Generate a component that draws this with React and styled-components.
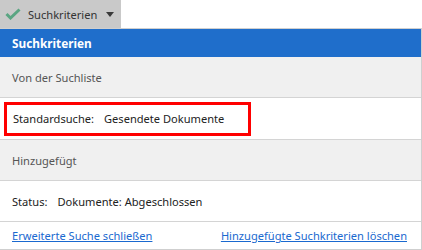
import React from "react";
import styled, { createGlobalStyle } from "styled-components";

const Global = createGlobalStyle`
  html, body {
    margin: 0;
    padding: 0;
    background: #ffffff;
    font-family: "Noto Sans", "Open Sans", sans-serif;
    font-size: 11.1px;
  }
`;

const Page = styled.div`
  width: 422px;
  height: 250px;
  overflow: hidden;
`;

const Toolbar = styled.div`
  display: flex;
  height: 28px;
`;

const MenuButton = styled.div`
  display: flex;
  align-items: center;
  width: 121px;
  height: 28px;
  padding-left: 5px;
  box-sizing: border-box;
  background: #c9c9c9;
  color: #333333;
  gap: 7px;
`;

const Caret = styled.span`
  width: 0;
  height: 0;
  margin-left: 2px;
  border-left: 4px solid transparent;
  border-right: 4px solid transparent;
  border-top: 5px solid #3a3a3a;
`;

const Panel = styled.div`
  width: 422px;
  height: 222px;
  box-sizing: border-box;
  border-top: 1px solid #cfcfcf;
  border-right: 1px solid #cfcfcf;
  border-bottom: 1px solid #cfcfcf;
  display: flex;
  flex-direction: column;
`;

const Header = styled.div`
  height: 28px;
  flex: none;
  background: #1f6ecb;
  color: #ffffff;
  font-size: 11.8px;
  font-weight: bold;
  display: flex;
  align-items: center;
  padding-left: 12px;
`;

const Row = styled.div`
  height: ${(p) => p.$h || 41}px;
  flex: none;
  box-sizing: border-box;
  display: flex;
  align-items: center;
  padding-left: ${(p) => (p.$boxed ? 4 : 12)}px;
  background: ${(p) => (p.$section ? "#f0f0f0" : "#ffffff")};
  color: ${(p) => (p.$section ? "#555555" : "#222222")};
  border-bottom: 1px solid #d4d4d4;
`;

const Highlight = styled.div`
  width: 247px;
  height: 34px;
  box-sizing: border-box;
  border: 3px solid #ff0000;
  display: flex;
  align-items: center;
  padding-left: 6px;
`;

const Label = styled.span`
  margin-right: 10px;
`;

const Footer = styled.div`
  flex: 1;
  display: flex;
  align-items: center;
  justify-content: space-between;
  padding: 0 14px 0 12px;
`;

const Link = styled.a`
  color: #1a69cf;
  text-decoration: underline;
  cursor: pointer;
`;

function Check() {
  return (
    <svg width="16" height="12" viewBox="0 0 16 12">
      <path d="M1.5 6 L5.5 10 L14.5 1.5" fill="none" stroke="#5aa582" strokeWidth="3" />
    </svg>
  );
}

export default function App() {
  return (
    <Page>
      <Global />
      <Toolbar>
        <MenuButton>
          <Check />
          <span>Suchkriterien</span>
          <Caret />
        </MenuButton>
      </Toolbar>
      <Panel>
        <Header>Suchkriterien</Header>
        <Row $section $h={41}>Von der Suchliste</Row>
        <Row $boxed $h={42}>
          <Highlight>
            <Label>Standardsuche:</Label>
            Gesendete Dokumente
          </Highlight>
        </Row>
        <Row $section $h={41}>Hinzugefügt</Row>
        <Row $h={41}>
          <Label>Status:</Label>
          Dokumente: Abgeschlossen
        </Row>
        <Footer>
          <Link>Erweiterte Suche schließen</Link>
          <Link>Hinzugefügte Suchkriterien löschen</Link>
        </Footer>
      </Panel>
    </Page>
  );
}
